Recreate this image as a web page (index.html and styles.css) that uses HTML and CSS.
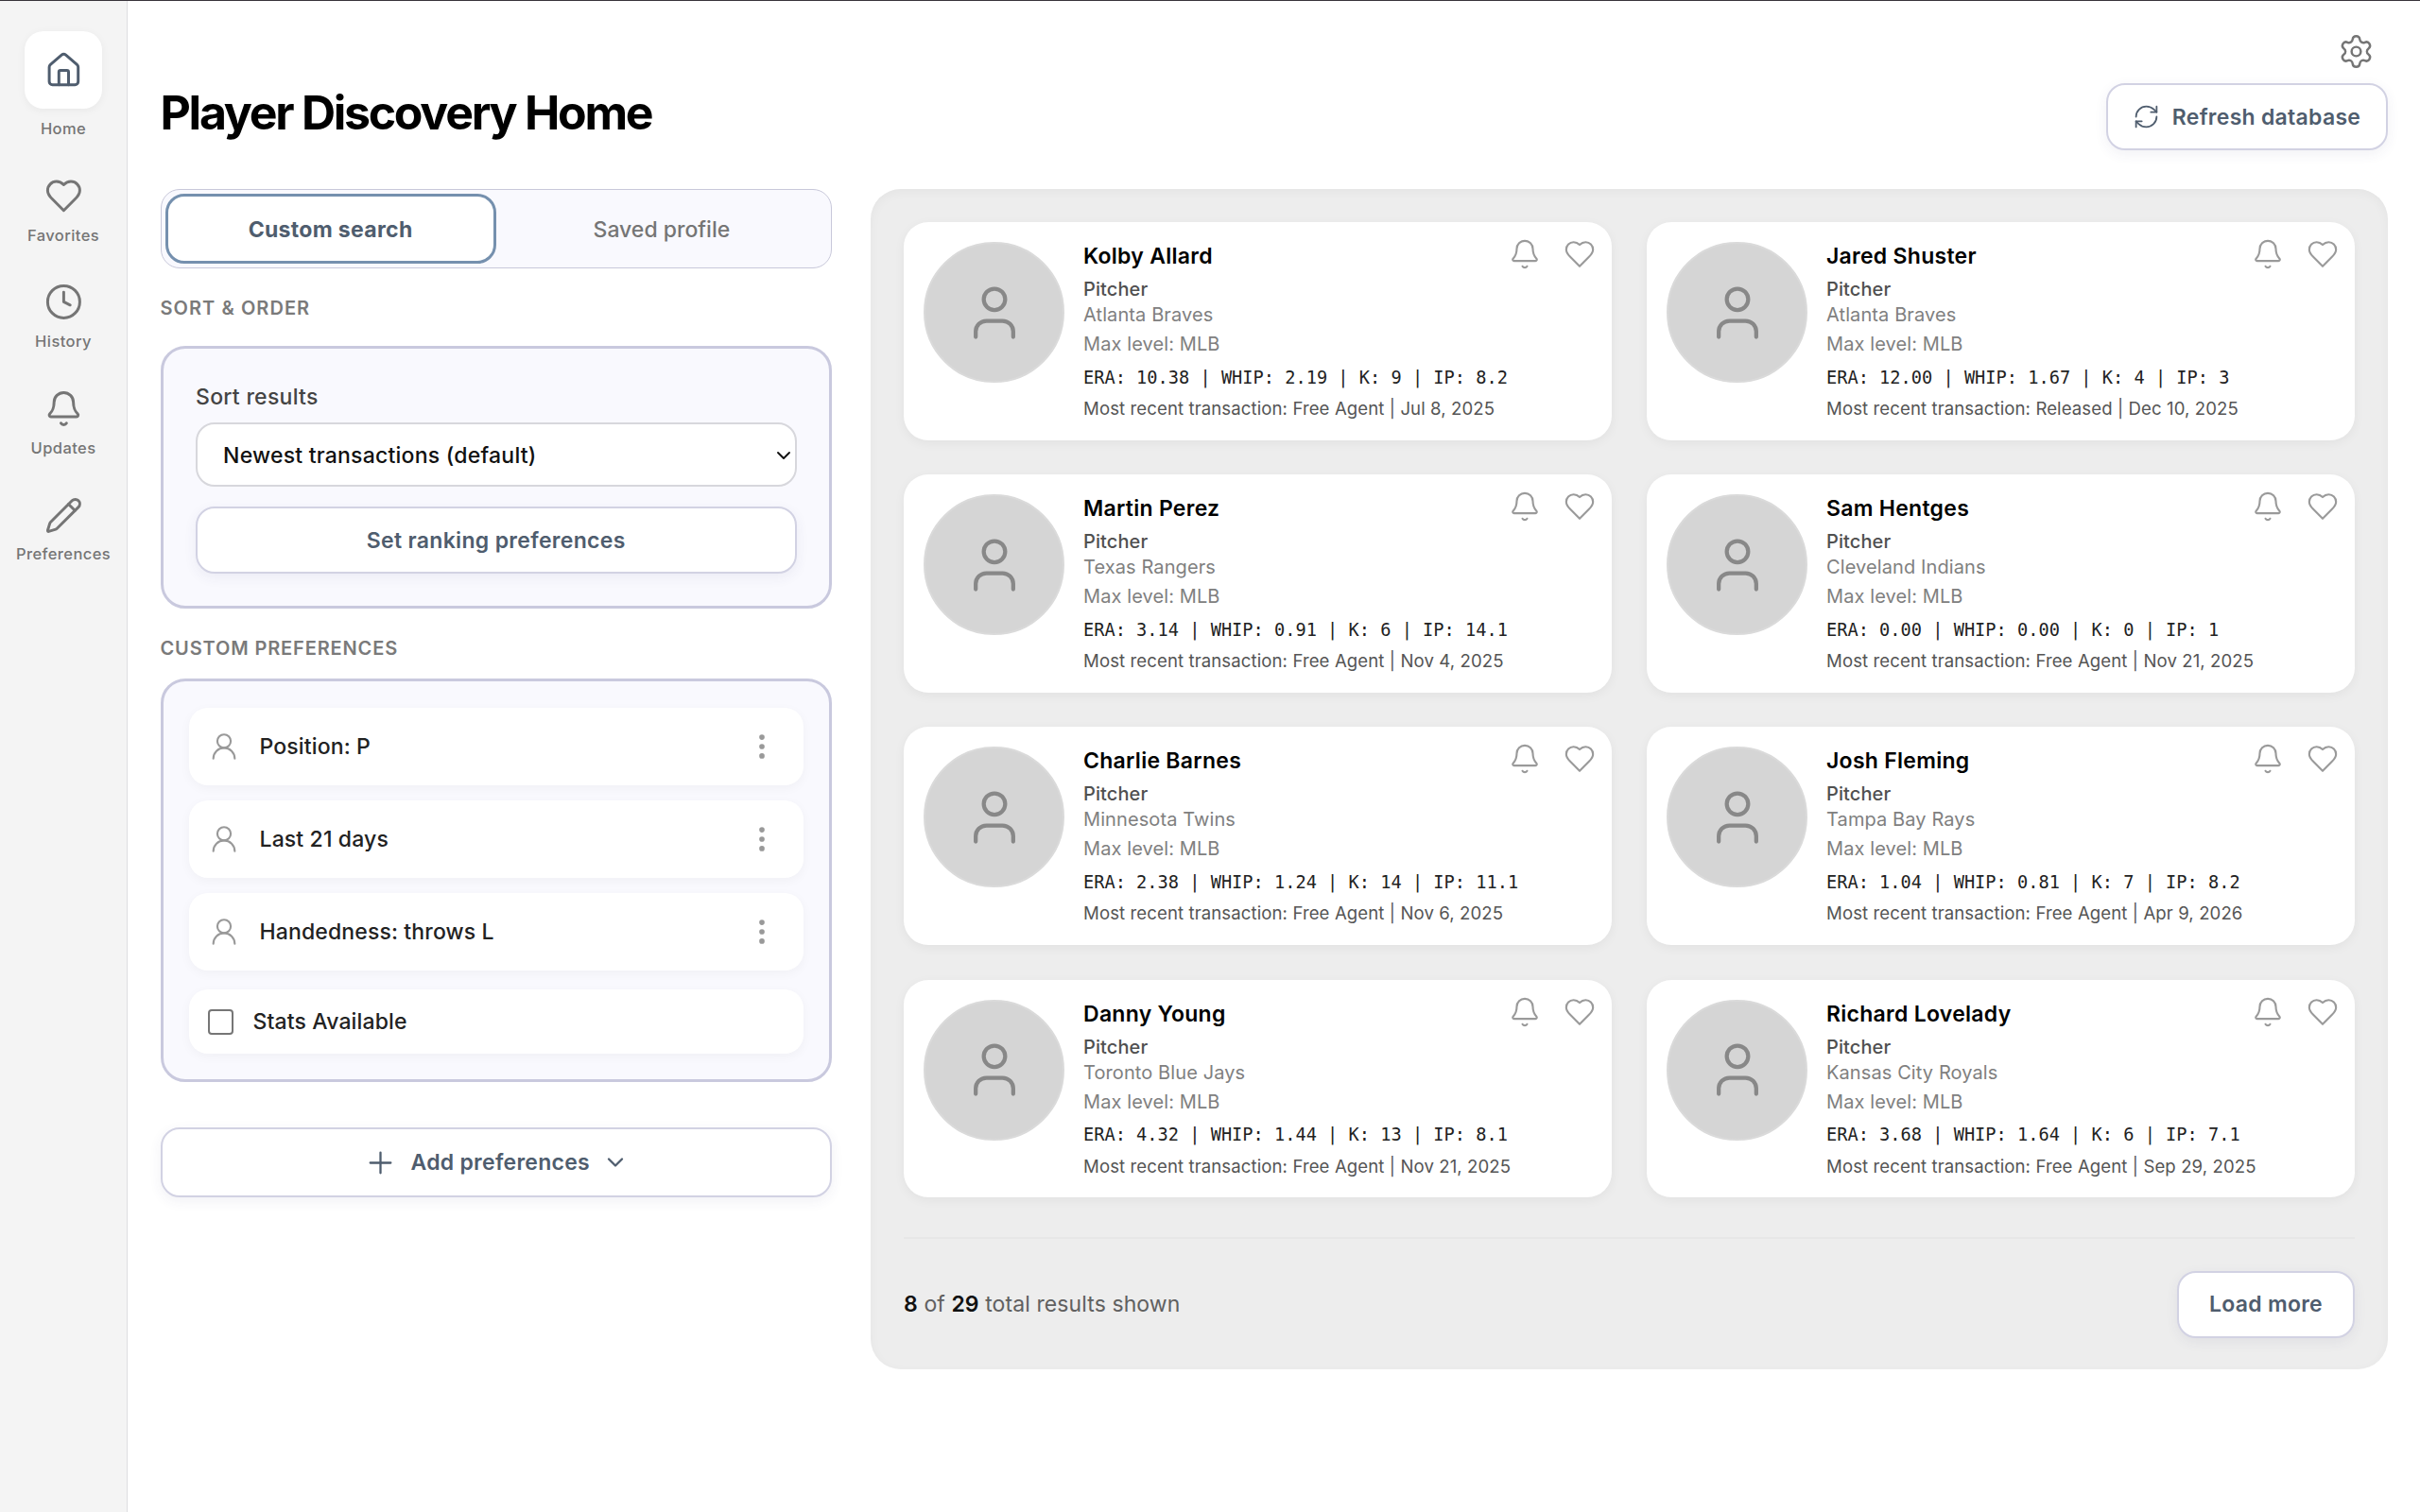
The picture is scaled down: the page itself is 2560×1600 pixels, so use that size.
FILE: index.html
```html
<!DOCTYPE html>
<html lang="en">
<head>
    <meta charset="UTF-8">
    <meta name="viewport" content="width=device-width, initial-scale=1.0">
    <title>Player Discovery</title>
    <link rel="stylesheet" href="styles.css">
</head>
<body>
    <!-- Shared icons -->
    <svg class="sprite">
        <symbol id="i-home" viewBox="0 0 24 24"><path d="M15 21v-8a1 1 0 0 0-1-1h-4a1 1 0 0 0-1 1v8"/><path d="M3 10a2 2 0 0 1 .709-1.528l7-5.999a2 2 0 0 1 2.582 0l7 5.999A2 2 0 0 1 21 10v9a2 2 0 0 1-2 2H5a2 2 0 0 1-2-2z"/></symbol>
        <symbol id="i-heart" viewBox="0 0 24 24"><path d="M19 14c1.49-1.46 3-3.21 3-5.5A5.5 5.5 0 0 0 16.5 3c-1.76 0-3 .5-4.5 2-1.5-1.5-2.74-2-4.5-2A5.5 5.5 0 0 0 2 8.5c0 2.3 1.5 4.05 3 5.5l7 7Z"/></symbol>
        <symbol id="i-clock" viewBox="0 0 24 24"><circle cx="12" cy="12" r="10"/><path d="M12 6v6l4 2"/></symbol>
        <symbol id="i-bell" viewBox="0 0 24 24"><path d="M10.268 21a2 2 0 0 0 3.464 0"/><path d="M3.262 15.326A1 1 0 0 0 4 17h16a1 1 0 0 0 .74-1.673C19.41 13.956 18 12.499 18 8A6 6 0 0 0 6 8c0 4.499-1.411 5.956-2.738 7.326"/></symbol>
        <symbol id="i-pencil" viewBox="0 0 24 24"><path d="M21.174 6.812a1 1 0 0 0-3.986-3.987L3.842 16.174a2 2 0 0 0-.5.83l-1.321 4.352a.5.5 0 0 0 .623.622l4.353-1.32a2 2 0 0 0 .83-.497z"/><path d="m15 5 4 4"/></symbol>
        <symbol id="i-gear" viewBox="0 0 24 24"><path d="M9.671 4.136a2.34 2.34 0 0 1 4.659 0 2.34 2.34 0 0 0 3.319 1.915 2.34 2.34 0 0 1 2.33 4.033 2.34 2.34 0 0 0 0 3.831 2.34 2.34 0 0 1-2.33 4.033 2.34 2.34 0 0 0-3.319 1.915 2.34 2.34 0 0 1-4.659 0 2.34 2.34 0 0 0-3.32-1.915 2.34 2.34 0 0 1-2.33-4.033 2.34 2.34 0 0 0 0-3.831A2.34 2.34 0 0 1 6.35 6.051a2.34 2.34 0 0 0 3.319-1.915"/><circle cx="12" cy="12" r="3"/></symbol>
        <symbol id="i-refresh" viewBox="0 0 24 24"><path d="M3 12a9 9 0 0 1 9-9 9.75 9.75 0 0 1 6.74 2.74L21 8"/><path d="M21 3v5h-5"/><path d="M21 12a9 9 0 0 1-9 9 9.75 9.75 0 0 1-6.74-2.74L3 16"/><path d="M8 16H3v5"/></symbol>
        <symbol id="i-user" viewBox="0 0 24 24"><path d="M19 21v-2a4 4 0 0 0-4-4H9a4 4 0 0 0-4 4v2"/><circle cx="12" cy="7" r="4"/></symbol>
        <symbol id="i-user-round" viewBox="0 0 24 24"><circle cx="12" cy="8" r="5"/><path d="M20 21a8 8 0 0 0-16 0"/></symbol>
        <symbol id="i-dots" viewBox="0 0 24 24"><circle cx="12" cy="5" r="1"/><circle cx="12" cy="12" r="1"/><circle cx="12" cy="19" r="1"/></symbol>
        <symbol id="i-plus" viewBox="0 0 24 24"><path d="M5 12h14"/><path d="M12 5v14"/></symbol>
        <symbol id="i-chevron" viewBox="0 0 24 24"><path d="m6 9 6 6 6-6"/></symbol>
    </svg>

    <div class="app">
        <nav class="sidebar">
            <a class="nav-item active"><span class="nav-tile"><svg class="icon"><use href="#i-home"/></svg></span><span class="nav-label">Home</span></a>
            <a class="nav-item"><svg class="icon"><use href="#i-heart"/></svg><span class="nav-label">Favorites</span></a>
            <a class="nav-item"><svg class="icon"><use href="#i-clock"/></svg><span class="nav-label">History</span></a>
            <a class="nav-item"><svg class="icon"><use href="#i-bell"/></svg><span class="nav-label">Updates</span></a>
            <a class="nav-item"><svg class="icon"><use href="#i-pencil"/></svg><span class="nav-label">Preferences</span></a>
        </nav>

        <main class="main">
            <header class="header">
                <h1>Player Discovery Home</h1>
                <div class="header-actions">
                    <svg class="icon gear"><use href="#i-gear"/></svg>
                    <button class="btn btn-refresh"><svg class="icon"><use href="#i-refresh"/></svg>Refresh database</button>
                </div>
            </header>

            <div class="content">
                <section class="filters">
                    <div class="tabs">
                        <button class="tab active">Custom search</button>
                        <button class="tab">Saved profile</button>
                    </div>

                    <h2 class="section-label">Sort &amp; order</h2>
                    <div class="panel sort-panel">
                        <div class="field-label">Sort results</div>
                        <div class="select"><span>Newest transactions (default)</span><svg class="icon"><use href="#i-chevron"/></svg></div>
                        <button class="btn btn-ranking">Set ranking preferences</button>
                    </div>

                    <h2 class="section-label pref-label">Custom preferences</h2>
                    <div class="panel pref-panel">
                        <div class="pref"><svg class="icon"><use href="#i-user-round"/></svg><span>Position: P</span><svg class="icon dots"><use href="#i-dots"/></svg></div>
                        <div class="pref"><svg class="icon"><use href="#i-user-round"/></svg><span>Last 21 days</span><svg class="icon dots"><use href="#i-dots"/></svg></div>
                        <div class="pref"><svg class="icon"><use href="#i-user-round"/></svg><span>Handedness: throws L</span><svg class="icon dots"><use href="#i-dots"/></svg></div>
                        <label class="check"><input type="checkbox"><span>Stats Available</span></label>
                    </div>

                    <button class="btn btn-add"><svg class="icon plus"><use href="#i-plus"/></svg>Add preferences<svg class="icon chevron"><use href="#i-chevron"/></svg></button>
                </section>

                <section class="results">
                    <div class="cards">
                        <article class="card">
                            <div class="avatar"><svg class="icon"><use href="#i-user"/></svg></div>
                            <div class="info">
                                <h3>Kolby Allard</h3>
                                <div class="position">Pitcher</div>
                                <div class="team">Atlanta Braves</div>
                                <div class="level">Max level: MLB</div>
                                <div class="stats">ERA: 10.38 | WHIP: 2.19 | K: 9 | IP: 8.2</div>
                                <div class="transaction">Most recent transaction: Free Agent | Jul 8, 2025</div>
                            </div>
                            <div class="card-actions"><svg class="icon"><use href="#i-bell"/></svg><svg class="icon"><use href="#i-heart"/></svg></div>
                        </article>
                        <article class="card">
                            <div class="avatar"><svg class="icon"><use href="#i-user"/></svg></div>
                            <div class="info">
                                <h3>Jared Shuster</h3>
                                <div class="position">Pitcher</div>
                                <div class="team">Atlanta Braves</div>
                                <div class="level">Max level: MLB</div>
                                <div class="stats">ERA: 12.00 | WHIP: 1.67 | K: 4 | IP: 3</div>
                                <div class="transaction">Most recent transaction: Released | Dec 10, 2025</div>
                            </div>
                            <div class="card-actions"><svg class="icon"><use href="#i-bell"/></svg><svg class="icon"><use href="#i-heart"/></svg></div>
                        </article>
                        <article class="card">
                            <div class="avatar"><svg class="icon"><use href="#i-user"/></svg></div>
                            <div class="info">
                                <h3>Martin Perez</h3>
                                <div class="position">Pitcher</div>
                                <div class="team">Texas Rangers</div>
                                <div class="level">Max level: MLB</div>
                                <div class="stats">ERA: 3.14 | WHIP: 0.91 | K: 6 | IP: 14.1</div>
                                <div class="transaction">Most recent transaction: Free Agent | Nov 4, 2025</div>
                            </div>
                            <div class="card-actions"><svg class="icon"><use href="#i-bell"/></svg><svg class="icon"><use href="#i-heart"/></svg></div>
                        </article>
                        <article class="card">
                            <div class="avatar"><svg class="icon"><use href="#i-user"/></svg></div>
                            <div class="info">
                                <h3>Sam Hentges</h3>
                                <div class="position">Pitcher</div>
                                <div class="team">Cleveland Indians</div>
                                <div class="level">Max level: MLB</div>
                                <div class="stats">ERA: 0.00 | WHIP: 0.00 | K: 0 | IP: 1</div>
                                <div class="transaction">Most recent transaction: Free Agent | Nov 21, 2025</div>
                            </div>
                            <div class="card-actions"><svg class="icon"><use href="#i-bell"/></svg><svg class="icon"><use href="#i-heart"/></svg></div>
                        </article>
                        <article class="card">
                            <div class="avatar"><svg class="icon"><use href="#i-user"/></svg></div>
                            <div class="info">
                                <h3>Charlie Barnes</h3>
                                <div class="position">Pitcher</div>
                                <div class="team">Minnesota Twins</div>
                                <div class="level">Max level: MLB</div>
                                <div class="stats">ERA: 2.38 | WHIP: 1.24 | K: 14 | IP: 11.1</div>
                                <div class="transaction">Most recent transaction: Free Agent | Nov 6, 2025</div>
                            </div>
                            <div class="card-actions"><svg class="icon"><use href="#i-bell"/></svg><svg class="icon"><use href="#i-heart"/></svg></div>
                        </article>
                        <article class="card">
                            <div class="avatar"><svg class="icon"><use href="#i-user"/></svg></div>
                            <div class="info">
                                <h3>Josh Fleming</h3>
                                <div class="position">Pitcher</div>
                                <div class="team">Tampa Bay Rays</div>
                                <div class="level">Max level: MLB</div>
                                <div class="stats">ERA: 1.04 | WHIP: 0.81 | K: 7 | IP: 8.2</div>
                                <div class="transaction">Most recent transaction: Free Agent | Apr 9, 2026</div>
                            </div>
                            <div class="card-actions"><svg class="icon"><use href="#i-bell"/></svg><svg class="icon"><use href="#i-heart"/></svg></div>
                        </article>
                        <article class="card">
                            <div class="avatar"><svg class="icon"><use href="#i-user"/></svg></div>
                            <div class="info">
                                <h3>Danny Young</h3>
                                <div class="position">Pitcher</div>
                                <div class="team">Toronto Blue Jays</div>
                                <div class="level">Max level: MLB</div>
                                <div class="stats">ERA: 4.32 | WHIP: 1.44 | K: 13 | IP: 8.1</div>
                                <div class="transaction">Most recent transaction: Free Agent | Nov 21, 2025</div>
                            </div>
                            <div class="card-actions"><svg class="icon"><use href="#i-bell"/></svg><svg class="icon"><use href="#i-heart"/></svg></div>
                        </article>
                        <article class="card">
                            <div class="avatar"><svg class="icon"><use href="#i-user"/></svg></div>
                            <div class="info">
                                <h3>Richard Lovelady</h3>
                                <div class="position">Pitcher</div>
                                <div class="team">Kansas City Royals</div>
                                <div class="level">Max level: MLB</div>
                                <div class="stats">ERA: 3.68 | WHIP: 1.64 | K: 6 | IP: 7.1</div>
                                <div class="transaction">Most recent transaction: Free Agent | Sep 29, 2025</div>
                            </div>
                            <div class="card-actions"><svg class="icon"><use href="#i-bell"/></svg><svg class="icon"><use href="#i-heart"/></svg></div>
                        </article>
                    </div>
                    <footer class="results-footer">
                        <div class="count"><b>8</b> of <b>29</b> total results shown</div>
                        <button class="btn btn-more">Load more</button>
                    </footer>
                </section>
            </div>
        </main>
    </div>
</body>
</html>
```
FILE: styles.css
```css
* {
    box-sizing: border-box;
}
body {
    margin: 0;
    height: 1600px;
    overflow: hidden;
    font-family: Inter, "Liberation Sans", sans-serif;
    font-size: 23px;
    color: #111;
    background-color: #fff;
    border-top: 1px solid #38343a;
}
h1, h2, h3 {
    margin: 0;
}
button {
    font-family: inherit;
    font-size: 23px;
    padding: 0;
}
.sprite {
    display: none;
}
.icon {
    display: block;
    flex: none;
    fill: none;
    stroke: currentColor;
    stroke-width: 1.5;
    stroke-linecap: round;
    stroke-linejoin: round;
}
.app {
    display: flex;
    height: 100%;
}

/* Sidebar */
.sidebar {
    display: flex;
    flex: none;
    flex-direction: column;
    align-items: center;
    gap: 39.8px;
    width: 135px;
    padding-top: 32.4px;
    background-color: #f4f4f4;
    border-right: 1px solid #dedee0;
}
.nav-item {
    display: flex;
    flex-direction: column;
    align-items: center;
    gap: 11px;
    padding-bottom: 1px;
    color: #757575;
}
.nav-item .icon {
    width: 40.8px;
    height: 40.8px;
    stroke-width: 1.75;
}
.nav-tile {
    display: flex;
    align-items: center;
    justify-content: center;
    width: 81.6px;
    height: 81.6px;
    border-radius: 20px;
    background-color: #fff;
    color: #4f5d6e;
    box-shadow: 0 2px 10px rgba(0, 0, 0, 0.05);
}
.nav-label {
    font-size: 16.5px;
    line-height: 20px;
    font-weight: 500;
    letter-spacing: 0.025em;
}

/* Header */
.main {
    flex: 1;
    min-width: 0;
    padding: 0 34.5px;
}
.header {
    display: flex;
    justify-content: space-between;
    height: 199px;
}
h1 {
    padding-top: 88px;
    font-size: 50px;
    line-height: 60px;
    font-weight: 700;
    letter-spacing: -0.0455em;
    color: #000;
}
.header-actions {
    display: flex;
    flex-direction: column;
    align-items: flex-end;
    padding-top: 34px;
}
.gear {
    width: 39px;
    height: 39px;
    margin: 0 13.5px 14px 0;
    color: #757575;
}
.btn {
    display: flex;
    align-items: center;
    justify-content: center;
    height: 71px;
    border: 2px solid #d2d2e3;
    border-radius: 20px;
    background-color: #fff;
    color: #4f5d6e;
    font-weight: 600;
    letter-spacing: 0.012em;
    box-shadow: 0 4px 14px rgba(60, 60, 110, 0.07);
}
.btn-refresh {
    width: 298px;
    gap: 13px;
}
.btn-refresh .icon {
    width: 29px;
    height: 29px;
}

/* Left column */
.content {
    display: flex;
    gap: 41px;
    align-items: flex-start;
}
.filters {
    flex: none;
    width: 710.5px;
}
.tabs {
    display: flex;
    height: 84px;
    padding: 4px;
    border: 1px solid #c8c8da;
    border-radius: 20px;
    background-color: #f9f9fe;
}
.tab {
    flex: 1;
    padding-top: 1px;
    border: 3px solid transparent;
    border-radius: 20px;
    background: none;
    font-weight: 500;
    color: #757575;
}
.tab.active {
    border-color: #7590ae;
    background-color: #fff;
    color: #4f5d6e;
    font-weight: 700;
    letter-spacing: 0.014em;
}
.section-label {
    margin: 30px 0 27.5px;
    font-size: 20px;
    line-height: 24px;
    font-weight: 600;
    letter-spacing: 0.053em;
    text-transform: uppercase;
    color: #7a7a7a;
}
.pref-label {
    margin-bottom: 20px;
    letter-spacing: 0.043em;
}
.panel {
    border: 3px solid #c9c9de;
    border-radius: 26px;
    background-color: #f9f9fe;
}
.sort-panel {
    height: 278.5px;
    padding: 37px 34.5px 0;
}
.field-label {
    line-height: 28px;
    margin-bottom: 13.5px;
    font-weight: 500;
    letter-spacing: 0.012em;
    color: #444;
}
.select {
    display: flex;
    align-items: center;
    justify-content: space-between;
    height: 68px;
    margin-bottom: 20.5px;
    padding: 1px 0 0 27px;
    border: 2px solid #d7d7dc;
    border-radius: 20px;
    background-color: #fff;
    font-weight: 500;
    letter-spacing: 0.01em;
}
.select .icon {
    width: 24px;
    height: 24px;
    stroke-width: 1.9;
}
.btn-ranking {
    width: 100%;
    padding-top: 1px;
    letter-spacing: 0.014em;
}
.pref-panel {
    height: 427px;
    padding: 28px 27px 0;
}
.pref, .check {
    display: flex;
    align-items: center;
    border-radius: 20px;
    background-color: #fff;
    font-weight: 500;
    letter-spacing: 0.006em;
    color: #222;
    box-shadow: 0 3px 12px rgba(0, 0, 0, 0.04);
}
.pref {
    height: 82px;
    margin-bottom: 16.2px;
    padding: 0 27px 0 20px;
}
.pref .icon {
    width: 34px;
    height: 34px;
    margin-right: 21px;
    color: #999;
}
.pref .dots {
    margin: 0 0 0 auto;
    stroke-width: 2;
}
.check {
    height: 68px;
    margin-top: 20px;
    padding-left: 20px;
    gap: 21px;
}
.check input {
    appearance: none;
    width: 27px;
    height: 27px;
    margin: 0;
    border: 2px solid #767676;
    border-radius: 4px;
    background-color: #fff;
}
.btn-add {
    width: 100%;
    height: 74px;
    margin-top: 48px;
}
.plus {
    width: 37px;
    height: 37px;
    margin-right: 13px;
}
.chevron {
    width: 28px;
    height: 28px;
    margin-left: 13px;
    stroke-width: 2;
}

/* Results */
.results {
    flex: 1;
    min-width: 0;
    padding: 35px 34.5px 0 35px;
    height: 1249px;
    border-radius: 32px;
    background-color: #ededed;
    box-shadow: inset 0 3px 12px rgba(0, 0, 0, 0.04);
}
.cards {
    display: grid;
    grid-template-columns: repeat(2, minmax(0, 1fr));
    gap: 36.5px 37px;
}
.card {
    display: flex;
    align-items: flex-start;
    height: 230.7px;
    padding: 21px 17px 0 21px;
    border-radius: 26px;
    background-color: #fff;
    box-shadow: 0 3px 12px rgba(0, 0, 0, 0.05);
}
.avatar {
    display: flex;
    align-items: center;
    justify-content: center;
    flex: none;
    width: 149px;
    height: 149px;
    border: 2px solid #dadada;
    border-radius: 50%;
    background-color: #d5d5d5;
    color: #888;
}
.avatar .icon {
    width: 68px;
    height: 68px;
}
.info {
    flex: 1;
    min-width: 0;
    padding: 1px 0 0 20px;
    white-space: nowrap;
}
.info h3 {
    font-size: 23px;
    line-height: 28px;
    font-weight: 600;
    letter-spacing: 0.012em;
    color: #000;
}
.position, .team, .level {
    font-size: 20px;
    line-height: 28px;
    letter-spacing: 0.005em;
    color: #808080;
}
.position {
    margin-top: 7px;
    font-weight: 500;
    color: #505050;
}
.team {
    margin-top: -1px;
}
.level {
    margin-top: 3px;
}
.stats {
    margin-top: 9.5px;
    font-family: "DejaVu Sans Mono", monospace;
    font-size: 18.65px;
    line-height: 24px;
    color: #222;
}
.transaction {
    margin-top: 8.5px;
    font-size: 18.6px;
    line-height: 24px;
    letter-spacing: 0.005em;
    color: #555;
}
.card-actions {
    display: flex;
    flex: none;
    gap: 24px;
    margin-top: -4px;
    color: #9a9a9a;
}
.card-actions .icon {
    width: 34px;
    height: 34px;
}
.results-footer {
    display: flex;
    justify-content: space-between;
    align-items: center;
    margin-top: 41.5px;
    padding-top: 34px;
    border-top: 2px solid #e7e7e7;
}
.count {
    letter-spacing: 0.004em;
    color: #606060;
}
.count b {
    font-weight: 600;
    color: #111;
}
.btn-more {
    width: 188px;
}
```
